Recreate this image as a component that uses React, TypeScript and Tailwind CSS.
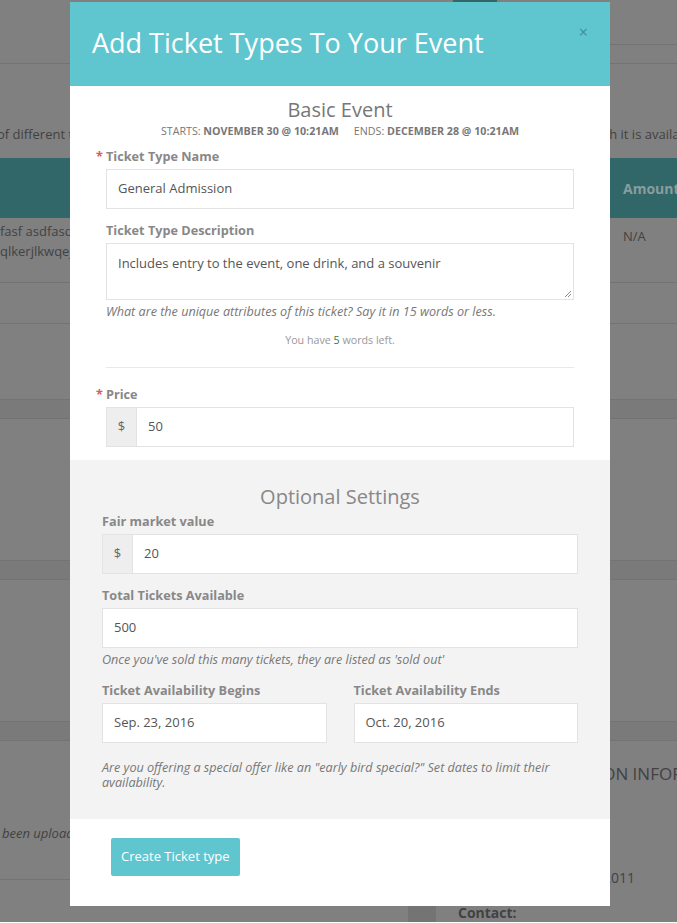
import React from "react"

const font = { fontFamily: '"Open Sans", "Liberation Sans", sans-serif' }

function Label({ children, required }: { children: React.ReactNode; required?: boolean }) {
  return (
    <label className="relative block text-[12.7px] leading-[18px] font-bold text-[#888]">
      {required && <span className="absolute -left-[10px] top-0 text-[#e0585b]">*</span>}
      {children}
    </label>
  )
}

function Input({ value }: { value: string }) {
  return (
    <div className="flex h-[40px] items-center border border-[#e3e3e3] bg-white px-[11px] text-[13px] text-[#555]">
      {value}
    </div>
  )
}

function MoneyInput({ value }: { value: string }) {
  return (
    <div className="flex h-[40px] border border-[#e3e3e3] bg-white text-[13px] text-[#555]">
      <div className="flex w-[30px] items-center justify-center border-r border-[#e3e3e3] bg-[#eee] text-[#666]">$</div>
      <div className="flex flex-1 items-center pl-[11px]">{value}</div>
    </div>
  )
}

function Help({ children, className = "" }: { children: React.ReactNode; className?: string }) {
  return <p className={"text-[12.6px] italic text-[#777] " + className}>{children}</p>
}

function Background() {
  return (
    <div className="flex w-full flex-col bg-[#808080] text-[13px] text-[#424242]">
      <div className="flex h-[45px]">
        <div className="w-[453px] shrink-0" />
        <div className="h-[2px] w-[44px] shrink-0 bg-[#316768]" />
        <div className="flex-1" />
        <div className="w-[230px] shrink-0 border-b border-[#737373]" />
      </div>
      <div className="h-[19px] border-b border-[#737373]" />
      <div className="flex h-[94px] items-end pb-[14px] whitespace-nowrap">
        <div className="-ml-[3px] w-[606px] shrink-0 overflow-hidden">
          of different ticket types for this event and the period in whi
        </div>
        <div className="shrink-0">ch it is available.</div>
      </div>
      <div className="flex h-[60px] items-center bg-[#316768]">
        <div className="w-[623px] shrink-0" />
        <div className="shrink-0 text-[14px] font-bold whitespace-nowrap text-[#8a9d9d]">Amounts</div>
      </div>
      <div className="flex h-[65px] border-b border-[#737373] pt-[3px] leading-[20px]">
        <div className="w-[623px] shrink-0 whitespace-nowrap">
          <div>fasf asdfasdf asdf</div>
          <div>qlkerjlkwqejr</div>
        </div>
        <div className="shrink-0 pt-[5px]">N/A</div>
      </div>
      <div className="h-[41px] border-b border-[#737373]" />
      <div className="h-[76px] border-b border-[#737373]" />
      <div className="h-[19px] border-b border-[#737373] bg-[#7a7a7a]" />
      <div className="h-[142px] border-b border-[#737373]" />
      <div className="h-[19px] border-b border-[#737373] bg-[#7a7a7a]" />
      <div className="h-[142px] border-b border-[#737373]" />
      <div className="h-[19px] border-b border-[#737373] bg-[#7a7a7a]" />
      <div className="flex h-[181px]">
        <div className="flex w-[408px] shrink-0 flex-col">
          <div className="h-[138px] pt-[83px] pl-[2px] italic whitespace-nowrap">been uploaded yet.</div>
          <div className="border-t border-[#737373]" />
        </div>
        <div className="flex min-w-0 flex-1 flex-col whitespace-nowrap">
          <div className="pl-[152px] pt-[20px] text-[17px]">SESSION INFORMATION</div>
          <div className="w-[227px] pt-[80px] text-right text-[14px]">(555) 555-2011</div>
          <div className="mt-auto flex h-[18px]">
            <div className="w-[28px] shrink-0 bg-[#747474]" />
            <div className="pl-[22px] pt-[2px] text-[14px] leading-[14px] font-bold">Contact:</div>
          </div>
        </div>
      </div>
    </div>
  )
}

export default function App() {
  return (
    <div className="relative h-[923px] w-[677px] overflow-hidden" style={font}>
      <Background />

      <div className="absolute left-[70px] top-[2px] w-[540px] bg-white">
        <div className="relative flex h-[84px] items-center bg-[#5fc6d0] px-[22px]">
          <h1 className="pb-[2px] text-[27px] font-normal text-white">Add Ticket Types To Your Event</h1>
          <span className="absolute right-[22px] top-[18px] text-[16px] text-[#3f8e96]">×</span>
        </div>

        <div className="px-[36px] pt-[11px] pb-[13px]">
          <h2 className="text-center text-[20px] leading-[26px] text-[#777]">Basic Event</h2>
          <p className="mt-[1px] text-center text-[10.7px] leading-[14px] whitespace-nowrap text-[#777]">
            STARTS: <b>NOVEMBER 30 @ 10:21AM</b>
            <span className="inline-block w-[15px]" />
            ENDS: <b>DECEMBER 28 @ 10:21AM</b>
          </p>

          <div className="mt-[9px]">
            <Label required>Ticket Type Name</Label>
            <div className="mt-[4px]">
              <Input value="General Admission" />
            </div>
          </div>

          <div className="mt-[12px]">
            <Label>Ticket Type Description</Label>
            <div className="relative mt-[4px] h-[57px] border border-[#e3e3e3] bg-white px-[11px] pt-[10px] text-[13px] leading-[18px] text-[#555]">
              Includes entry to the event, one drink, and a souvenir
              <svg className="absolute right-[1px] bottom-[1px]" width="8" height="8" viewBox="0 0 8 8">
                <path d="M7 1L1 7M7 4L4 7" stroke="#888" strokeWidth="1" />
              </svg>
            </div>
            <Help className="mt-[4px] leading-[16px]">
              What are the unique attributes of this ticket? Say it in 15 words or less.
            </Help>
            <p className="mt-[13px] text-center text-[10.7px] leading-[15px] text-[#999]">
              You have <span className="text-[#3c763d]">5</span> words left.
            </p>
          </div>

          <div className="mt-[19px] border-t border-[#e8e8e8]" />

          <div className="mt-[17px]">
            <Label required>Price</Label>
            <div className="mt-[4px]">
              <MoneyInput value="50" />
            </div>
          </div>
        </div>

        <div className="bg-[#f3f3f3] px-[32px] pt-[24px] pb-[29px]">
          <h2 className="text-center text-[20px] leading-[26px] text-[#888]">Optional Settings</h2>

          <div className="mt-[2px]">
            <Label>Fair market value</Label>
            <div className="mt-[4px]">
              <MoneyInput value="20" />
            </div>
          </div>

          <div className="mt-[12px]">
            <Label>Total Tickets Available</Label>
            <div className="mt-[4px]">
              <Input value="500" />
            </div>
            <Help className="mt-[4px] leading-[16px]">Once you've sold this many tickets, they are listed as 'sold out'</Help>
          </div>

          <div className="mt-[13px] grid grid-cols-2 gap-x-[27px]">
            <div>
              <Label>Ticket Availability Begins</Label>
              <div className="mt-[4px]">
                <Input value="Sep. 23, 2016" />
              </div>
            </div>
            <div>
              <Label>Ticket Availability Ends</Label>
              <div className="mt-[4px]">
                <Input value="Oct. 20, 2016" />
              </div>
            </div>
          </div>

          <Help className="mt-[17px] pr-[24px] leading-[15px]">
            Are you offering a special offer like an "early bird special?" Set dates to limit their availability.
          </Help>
        </div>

        <div className="px-[41px] pt-[19px] pb-[30px]">
          <button className="h-[38px] rounded-[2px] bg-[#5fc6d0] px-[10px] text-[13px] text-white">
            Create Ticket type
          </button>
        </div>
      </div>
    </div>
  )
}
